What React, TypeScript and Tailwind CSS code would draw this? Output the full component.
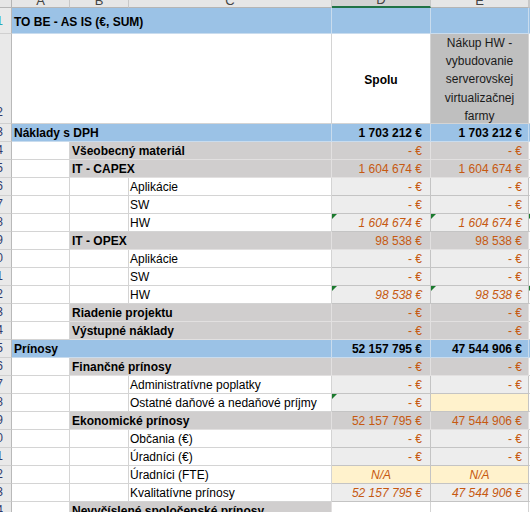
import type { ReactNode } from 'react'

type Kind = 'blue' | 'cat' | 'sub'

interface Row {
  n: number
  kind: Kind
  label: string
  d?: string
  e?: string
  italic?: boolean
  triD?: boolean
  triE?: boolean
  triF?: boolean
  creamE?: boolean
  na?: boolean
  blankDE?: boolean
}

const ROWS: Row[] = [
  { n: 3, kind: 'blue', label: 'Náklady s DPH', d: '1 703 212 €', e: '1 703 212 €' },
  { n: 4, kind: 'cat', label: 'Všeobecný materiál', d: '- €', e: '- €' },
  { n: 5, kind: 'cat', label: 'IT - CAPEX', d: '1 604 674 €', e: '1 604 674 €' },
  { n: 6, kind: 'sub', label: 'Aplikácie', d: '- €', e: '- €' },
  { n: 7, kind: 'sub', label: 'SW', d: '- €', e: '- €' },
  { n: 8, kind: 'sub', label: 'HW', d: '1 604 674 €', e: '1 604 674 €', italic: true, triD: true, triE: true, triF: true },
  { n: 9, kind: 'cat', label: 'IT - OPEX', d: '98 538 €', e: '98 538 €' },
  { n: 10, kind: 'sub', label: 'Aplikácie', d: '- €', e: '- €' },
  { n: 11, kind: 'sub', label: 'SW', d: '- €', e: '- €' },
  { n: 12, kind: 'sub', label: 'HW', d: '98 538 €', e: '98 538 €', italic: true, triD: true, triE: true, triF: true },
  { n: 13, kind: 'cat', label: 'Riadenie projektu', d: '- €', e: '- €' },
  { n: 14, kind: 'cat', label: 'Výstupné náklady', d: '- €', e: '- €' },
  { n: 15, kind: 'blue', label: 'Prínosy', d: '52 157 795 €', e: '47 544 906 €' },
  { n: 16, kind: 'cat', label: 'Finančné prínosy', d: '- €', e: '- €' },
  { n: 17, kind: 'sub', label: 'Administratívne poplatky', d: '- €', e: '- €' },
  { n: 18, kind: 'sub', label: 'Ostatné daňové a nedaňové príjmy', d: '- €', triD: true, creamE: true },
  { n: 19, kind: 'cat', label: 'Ekonomické prínosy', d: '52 157 795 €', e: '47 544 906 €' },
  { n: 20, kind: 'sub', label: 'Občania (€)', d: '- €', e: '- €' },
  { n: 21, kind: 'sub', label: 'Úradníci (€)', d: '- €', e: '- €' },
  { n: 22, kind: 'sub', label: 'Úradníci (FTE)', na: true },
  { n: 23, kind: 'sub', label: 'Kvalitatívne prínosy', d: '52 157 795 €', e: '47 544 906 €', italic: true },
  { n: 24, kind: 'cat', label: 'Nevyčíslené spoločenské prínosy', blankDE: true },
]

function Tri() {
  return (
    <span className="absolute left-0 top-0 size-0 border-t-[5px] border-r-[5px] border-t-[#1b7a2e] border-r-transparent" />
  )
}

function RowNum({ n, tall }: { n: number; tall?: boolean }) {
  return (
    <div className={`flex justify-end items-end overflow-hidden bg-[#e9e9e9] border-r border-r-[#b9b9b9] border-b border-b-[#d0d0d0] ${tall ? 'pb-[3px]' : 'pb-[1px]'}`}>
      <span className="shrink-0 mr-[8px] text-[12px] leading-[15px] text-[#2f3a6b]">{n}</span>
    </div>
  )
}

function Val({ text, bg, italic, bold, tri, pr, center }: { text?: string; bg: string; italic?: boolean; bold?: boolean; tri?: boolean; pr: string; center?: boolean }) {
  return (
    <div className={`relative flex items-end leading-[15px] border-r border-b overflow-hidden ${center ? 'justify-center' : `justify-end ${pr}`} ${bg} ${italic ? 'italic' : ''} ${bold ? 'font-bold text-black' : 'text-[#c65911]'}`}>
      {tri && <Tri />}
      {text}
    </div>
  )
}

function DataRow({ r }: { r: Row }) {
  const blue = 'bg-[#9bc2e6] border-[#c9dcee]'
  const gray = 'bg-[#d0cece] border-[#e2e0e0]'
  const light = 'bg-[#ededed] border-[#c4c4c4]'
  const white = 'bg-white border-[#d4d4d4]'
  const cream = 'bg-[#fff2cc] border-[#c4c4c4]'

  let label: ReactNode
  let valBg = light
  if (r.kind === 'blue') {
    valBg = blue
    label = (
      <div className={`col-span-3 flex items-end leading-[15px] pl-[2px] font-bold border-r border-b ${blue}`}>{r.label}</div>
    )
  } else if (r.kind === 'cat') {
    valBg = gray
    label = (
      <>
        <div className={`border-r border-b ${white}`} />
        <div className={`col-span-2 flex items-end leading-[15px] pl-[2px] font-bold border-r border-b ${gray}`}>{r.label}</div>
      </>
    )
  } else {
    label = (
      <>
        <div className={`border-r border-b ${white}`} />
        <div className={`border-r border-b ${white}`} />
        <div className={`flex items-end leading-[15px] pl-[1px] whitespace-nowrap border-r border-b ${white}`}>{r.label}</div>
      </>
    )
  }
  if (r.blankDE) valBg = white

  return (
    <>
      <RowNum n={r.n} />
      {label}
      <Val text={r.na ? 'N/A' : r.d} bg={r.na ? cream : valBg} italic={r.italic || r.na} bold={r.kind === 'blue'} tri={r.triD} pr="pr-[8px]" center={r.na} />
      <Val text={r.na ? 'N/A' : r.e} bg={r.na || r.creamE ? cream : valBg} italic={r.italic || r.na} bold={r.kind === 'blue'} tri={r.triE} pr="pr-[6px]" center={r.na} />
      <div className={`relative border-b ${r.kind === 'blue' ? blue : white}`}>{r.triF && <Tri />}</div>
    </>
  )
}

export default function App() {
  const letters = ['A', 'B', 'C', 'D', 'E', 'F']
  return (
    <div className="w-[530px] h-[512px] overflow-hidden bg-white text-[12px] text-black font-['Liberation_Sans',Arial,sans-serif]">
      <div className="grid grid-cols-[12px_58px_59px_203px_99px_98px_1fr] grid-rows-[8px_26px_90px] auto-rows-[18px]">
        {/* hlavička stĺpcov */}
        <div className="bg-[#e6e6e6] border-r border-b border-[#b5b5b5]" />
        {letters.map(l => (
          <div
            key={l}
            className={`flex justify-center items-end overflow-hidden border-r border-r-[#c8c8c8] ${
              l === 'D' ? 'bg-[#d3d3d3] border-b-2 border-b-[#217346]' : 'bg-[#e6e6e6] border-b border-b-[#b5b5b5]'
            }`}
          >
            <span className="text-[13px] leading-[13px] text-[#444]">{l}</span>
          </div>
        ))}

        {/* riadok 1 */}
        <div className="flex justify-end items-center overflow-hidden bg-[#e9e9e9] border-r border-r-[#b9b9b9] border-b border-b-[#d0d0d0]">
          <span className="shrink-0 mr-[8px] text-[12px] text-[#2aa7b5]">1</span>
        </div>
        <div className="col-span-3 flex items-center pl-[2px] pt-[3px] font-bold bg-[#9bc2e6] border-r border-b border-[#c9dcee]">
          TO BE - AS IS (€, SUM)
        </div>
        <div className="bg-[#9bc2e6] border-r border-b border-[#c9dcee]" />
        <div className="bg-[#9bc2e6] border-r border-b border-[#c9dcee]" />
        <div className="bg-[#9bc2e6] border-b border-[#c9dcee]" />

        {/* riadok 2 */}
        <RowNum n={2} tall />
        <div className="col-span-3 bg-white border-r border-b border-[#d4d4d4]" />
        <div className="flex items-center justify-center pt-[3px] font-bold bg-white border-r border-b border-[#d4d4d4]">Spolu</div>
        <div className="flex items-center justify-center pt-[2px] bg-[#bfbfbf] border-r border-b border-[#d4d4d4] overflow-hidden">
          <div className="text-center leading-[18.3px] text-[#1a1a1a]">
            <div>Nákup HW -</div>
            <div>vybudovanie</div>
            <div>serverovskej</div>
            <div>virtualizačnej</div>
            <div>farmy</div>
          </div>
        </div>
        <div className="bg-white border-b border-[#d4d4d4]" />

        {ROWS.map(r => (
          <DataRow key={r.n} r={r} />
        ))}
      </div>
    </div>
  )
}
